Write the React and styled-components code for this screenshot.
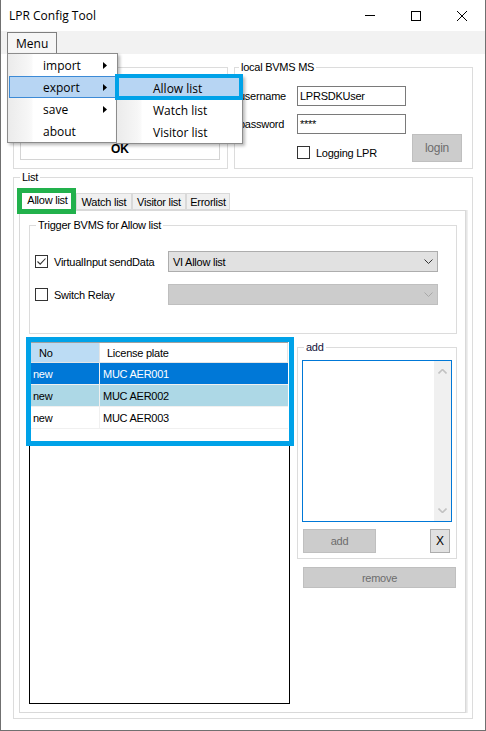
import React from 'react';
import styled, { createGlobalStyle } from 'styled-components';

const UI = `"Liberation Sans", Arial, sans-serif`;
const MENU = `"Open Sans", "Noto Sans", sans-serif`;

const GlobalStyle = createGlobalStyle`
  *, *::before, *::after { box-sizing: border-box; }
  html, body { margin: 0; padding: 0; background: #fff; }
  body { font-family: ${UI}; font-size: 11px; color: #000; letter-spacing: -0.25px; }
`;

const Window = styled.div`
  width: 486px;
  height: 731px;
  background: #fff;
  border-left: 1px solid #707070;
  border-right: 1px solid #707070;
  border-bottom: 1px solid #707070;
  display: flex;
  flex-direction: column;
  overflow: hidden;
`;

const TitleBar = styled.div`
  height: 31px;
  flex: none;
  display: flex;
  align-items: center;
  padding-left: 8px;
  font-family: ${MENU};
  font-size: 12px;
  letter-spacing: 0;
`;

const Controls = styled.div`
  margin-left: auto;
  display: flex;
  height: 100%;
`;

const ControlButton = styled.div`
  width: 46px;
  height: 100%;
  display: flex;
  align-items: center;
  justify-content: center;
`;

const MenuBar = styled.div`
  position: relative;
  height: 23px;
  flex: none;
  background: #f2f2f2;
  padding: 1px 0 0 6px;
  z-index: 10;
  font-family: ${MENU};
  font-size: 12px;
  letter-spacing: 0;
`;

const MenuTop = styled.div`
  width: 50px;
  height: 22px;
  border: 1px solid #7f7f7f;
  border-bottom: none;
  padding-left: 8px;
  display: flex;
  align-items: center;
  background: #f6f6f6;
`;

const PopupBase = styled.div`
  position: absolute;
  border: 1px solid #8c8c8c;
  background: linear-gradient(to right, #ebebeb 0px, #f6f6f6 20px, #fafafa 24px, #fff 25px);
  box-shadow: 2px 2px 3px rgba(0, 0, 0, 0.28);
`;

const Dropdown = styled(PopupBase)`
  left: 6px;
  top: 22px;
  width: 111px;
  height: 90px;
`;

const SubMenu = styled(PopupBase)`
  left: 115px;
  top: 44px;
  width: 127px;
  height: 69px;
  padding-top: 1px;
`;

const MenuEntry = styled.div`
  position: relative;
  height: 22px;
  display: flex;
  align-items: center;
  padding-left: ${p => p.$indent}px;
  padding-right: 9px;
  margin-left: ${p => (p.$sub ? 0 : 1)}px;
  border: 1px solid ${p => (p.$active ? '#3c8ad6' : 'transparent')};
  background: ${p => (p.$active ? '#b7d5f3' : 'transparent')};
`;

const MenuArrow = styled.svg`
  margin-left: auto;
`;

const Annotation = styled.span`
  position: absolute;
  pointer-events: none;
  z-index: 5;
`;

const MenuMark = styled(Annotation)`
  left: -2px;
  top: -2px;
  width: 128px;
  height: 26px;
  border: 4px solid #00a2e8;
`;

const TabMark = styled(Annotation)`
  left: -3px;
  top: -3px;
  width: 59px;
  height: 26px;
  border: 5px solid #22b14c;
`;

const ListMark = styled(Annotation)`
  left: -4px;
  top: -5px;
  width: 268px;
  height: 109px;
  border: 5px solid #00a2e8;
`;

const Body = styled.div`
  flex: 1;
  min-height: 0;
  display: flex;
  flex-direction: column;
  padding: 13px 12px 11px;
`;

const TopRow = styled.div`
  display: flex;
  gap: 6px;
  height: 102px;
  flex: none;
`;

const Group = styled.div`
  border: 1px solid #dcdcdc;
  display: flex;
  flex-direction: column;
  position: relative;
`;

const Legend = styled.div`
  align-self: flex-start;
  margin: -7px 0 0 ${p => p.$ml ?? 1}px;
  padding: 0 2px;
  background: #fff;
  line-height: 13px;
  height: 13px;
  color: ${p => p.$color || '#000'};
`;

const LoginGroup = styled(Group)`
  width: 215px;
`;

const BvmsGroup = styled(Group)`
  flex: 1;
  padding: 0 10px 0 4px;
`;

const OkButton = styled.div`
  margin: auto 0 8px 6px;
  width: 200px;
  height: 22px;
  border: 1px solid #d4d4d4;
  background: #fff;
  display: flex;
  align-items: center;
  justify-content: center;
  font-weight: bold;
  font-size: 12px;
  letter-spacing: 0;
`;

const FormRow = styled.div`
  display: flex;
  align-items: center;
  margin-top: ${p => p.$mt}px;
`;

const FieldLabel = styled.span`
  width: 58px;
  flex: none;
`;

const TextBox = styled.div`
  width: 109px;
  height: 20px;
  border: 1px solid #7a7a7a;
  background: #fff;
  display: flex;
  align-items: center;
  padding-left: 2px;
`;

const LoginRow = styled.div`
  display: flex;
  align-items: flex-start;
  height: 28px;
`;

const CheckItem = styled.label`
  display: flex;
  align-items: center;
  gap: 6px;
  margin-left: ${p => p.$ml || 0}px;
  margin-top: ${p => p.$mt || 0}px;
  width: ${p => (p.$w ? `${p.$w}px` : 'auto')};
  flex: none;
`;

const CheckBoxBox = styled.span`
  width: 13px;
  height: 13px;
  border: 1px solid #333;
  background: #fff;
  display: inline-flex;
  align-items: center;
  justify-content: center;
  flex: none;
`;

const Button = styled.div`
  width: ${p => p.$w}px;
  height: ${p => p.$h}px;
  display: flex;
  align-items: center;
  justify-content: center;
  flex: none;
  font-size: ${p => p.$fs || 11}px;
  background: ${p => (p.$disabled ? '#cccccc' : '#e1e1e1')};
  border: 1px solid ${p => (p.$disabled ? '#bfbfbf' : '#adadad')};
  color: ${p => (p.$disabled ? '#6d6d6d' : '#000')};
`;

const LoginButton = styled(Button)`
  margin-left: auto;
`;

const ListGroup = styled(Group)`
  flex: 1;
  min-height: 0;
  margin-top: 8px;
  padding: 0 6px 5px 5px;
`;

const TabStrip = styled.div`
  display: flex;
  align-items: flex-end;
  height: 20px;
  margin-top: 6px;
  position: relative;
  z-index: 1;
  flex: none;
`;

const Tab = styled.div`
  position: relative;
  width: ${p => p.$w}px;
  height: ${p => (p.$selected ? 21 : 17)}px;
  margin-bottom: ${p => (p.$selected ? -1 : 0)}px;
  padding-bottom: ${p => (p.$selected ? 2 : 0)}px;
  background: ${p => (p.$selected ? '#fff' : '#f0f0f0')};
  border: 1px solid #d9d9d9;
  border-bottom: ${p => (p.$selected ? 'none' : '1px solid #d9d9d9')};
  display: flex;
  align-items: center;
  justify-content: center;
  white-space: nowrap;
`;

const TabPanel = styled.div`
  flex: 1;
  min-height: 0;
  border: 1px solid #d9d9d9;
  box-shadow: 1px 0 0 #e6e6e6, 2px 0 0 #efefef;
  display: flex;
  flex-direction: column;
  padding: 14px 8px 8px 9px;
`;

const TriggerGroup = styled(Group)`
  flex: none;
  padding: 0 0 28px 5px;
`;

const TriggerRow = styled.div`
  display: flex;
  align-items: center;
  height: 21px;
  margin-top: ${p => p.$mt}px;
`;

const Combo = styled.div`
  width: 270px;
  height: 21px;
  display: flex;
  align-items: center;
  padding: 0 4px 0 4px;
  background: ${p => (p.$disabled ? '#cccccc' : '#e1e1e1')};
  border: 1px solid ${p => (p.$disabled ? '#bfbfbf' : '#adadad')};
`;

const ComboText = styled.span`
  flex: 1;
`;

const BottomRow = styled.div`
  flex: 1;
  min-height: 0;
  display: flex;
  gap: 7px;
  margin-top: 7px;
`;

const ListBox = styled.div`
  position: relative;
  width: 261px;
  border: 1px solid #000;
  padding: 0 1px;
  background: #fff;
`;

const ListHeader = styled.div`
  display: flex;
  height: 21px;
  border-top: 1px solid #a0a0a0;
  border-bottom: 1px solid #e5e5e5;
`;

const HeaderCell = styled.div`
  display: flex;
  align-items: center;
  padding-left: ${p => p.$pl}px;
  width: ${p => (p.$w ? `${p.$w}px` : 'auto')};
  flex: ${p => (p.$w ? 'none' : 1)};
  background: ${p => p.$bg || '#fff'};
  border-right: 1px solid #e5e5e5;
`;

const ListRow = styled.div`
  display: flex;
  height: 22px;
  background: ${p => p.$bg};
  color: ${p => p.$fg || '#000'};
  border-bottom: 1px solid #f0f0f0;
`;

const RowCell = styled.div`
  display: flex;
  align-items: center;
  padding-left: ${p => p.$pl}px;
  width: ${p => (p.$w ? `${p.$w}px` : 'auto')};
  flex: ${p => (p.$w ? 'none' : 1)};
  border-right: ${p => (p.$w ? '1px solid #f0f0f0' : 'none')};
`;

const RightCol = styled.div`
  width: 160px;
  display: flex;
  flex-direction: column;
  padding-top: 6px;
`;

const AddGroup = styled(Group)`
  height: 212px;
  flex: none;
  padding: 0 4px 5px 4px;
`;

const TextArea = styled.div`
  margin-top: 6px;
  width: 150px;
  height: 162px;
  border: 1px solid #0078d7;
  background: #fff;
  display: flex;
  justify-content: flex-end;
`;

const ScrollBar = styled.div`
  width: 17px;
  background: #f0f0f0;
  display: flex;
  flex-direction: column;
  justify-content: space-between;
  align-items: center;
  padding: 8px 0;
`;

const ButtonRow = styled.div`
  display: flex;
  justify-content: space-between;
  margin-top: 7px;
  padding: 0 2px 0 1px;
`;

const RemoveButton = styled(Button)`
  margin: 8px 0 0 6px;
`;

const Chevron = ({ color = '#333', up = false, w = 9, h = 5, sw = 1 }) => (
  <svg width={w} height={h} viewBox="0 0 9 5">
    <path
      d={up ? 'M0.5 4.5 L4.5 0.5 L8.5 4.5' : 'M0.5 0.5 L4.5 4.5 L8.5 0.5'}
      fill="none"
      stroke={color}
      strokeWidth={sw}
    />
  </svg>
);

const Arrow = () => (
  <MenuArrow width="4" height="7" viewBox="0 0 4 7">
    <polygon points="0,0 4,3.5 0,7" fill="#000" />
  </MenuArrow>
);

const Check = ({ checked }) => (
  <CheckBoxBox>
    {checked && (
      <svg width="11" height="11" viewBox="0 0 11 11">
        <path d="M1.5 5.5 L4.2 8.2 L9.5 2.5" fill="none" stroke="#333" strokeWidth="1.1" />
      </svg>
    )}
  </CheckBoxBox>
);

const rows = [
  { no: 'new', plate: 'MUC AER001', bg: '#0078d7', fg: '#fff' },
  { no: 'new', plate: 'MUC AER002', bg: '#add8e6' },
  { no: 'new', plate: 'MUC AER003', bg: '#fff' },
];

const tabs = [
  { label: 'Allow list', w: 57, selected: true },
  { label: 'Watch list', w: 56 },
  { label: 'Visitor list', w: 54 },
  { label: 'Errorlist', w: 44 },
];

export default function App() {
  return (
    <>
      <GlobalStyle />
      <Window>
        <TitleBar>
          <span>LPR Config Tool</span>
          <Controls>
            <ControlButton>
              <svg width="10" height="1" viewBox="0 0 10 1">
                <rect x="0" y="0" width="10" height="1" fill="#000" />
              </svg>
            </ControlButton>
            <ControlButton>
              <svg width="10" height="10" viewBox="0 0 10 10">
                <rect x="0.5" y="0.5" width="9" height="9" fill="none" stroke="#000" strokeWidth="1" />
              </svg>
            </ControlButton>
            <ControlButton>
              <svg width="10" height="10" viewBox="0 0 10 10">
                <path d="M0 0 L10 10 M10 0 L0 10" stroke="#000" strokeWidth="1" />
              </svg>
            </ControlButton>
          </Controls>
        </TitleBar>

        <MenuBar>
          <MenuTop>Menu</MenuTop>
          <Dropdown>
            <MenuEntry $indent={33}>import<Arrow /></MenuEntry>
            <MenuEntry $indent={33} $active>export<Arrow /></MenuEntry>
            <MenuEntry $indent={33}>save<Arrow /></MenuEntry>
            <MenuEntry $indent={33}>about</MenuEntry>
          </Dropdown>
          <SubMenu>
            <MenuEntry $indent={35} $sub $active>Allow list</MenuEntry>
            <MenuEntry $indent={35} $sub>Watch list</MenuEntry>
            <MenuEntry $indent={35} $sub>Visitor list</MenuEntry>
            <MenuMark />
          </SubMenu>
        </MenuBar>

        <Body>
          <TopRow>
            <LoginGroup>
              <OkButton>OK</OkButton>
            </LoginGroup>
            <BvmsGroup>
              <Legend $ml={0}>local BVMS MS</Legend>
              <FormRow $mt={12}>
                <FieldLabel>username</FieldLabel>
                <TextBox>LPRSDKUser</TextBox>
              </FormRow>
              <FormRow $mt={8}>
                <FieldLabel>password</FieldLabel>
                <TextBox>****</TextBox>
              </FormRow>
              <LoginRow>
                <CheckItem $ml={58} $mt={12}>
                  <Check />
                  <span>Logging LPR</span>
                </CheckItem>
                <LoginButton $w={50} $h={28} $disabled $fs={12}>login</LoginButton>
              </LoginRow>
            </BvmsGroup>
          </TopRow>

          <ListGroup>
            <Legend $ml={1}>List</Legend>
            <TabStrip>
              {tabs.map(t => (
                <Tab key={t.label} $w={t.w} $selected={t.selected}>
                  {t.label}
                  {t.selected && <TabMark />}
                </Tab>
              ))}
            </TabStrip>
            <TabPanel>
              <TriggerGroup>
                <Legend $ml={1}>Trigger BVMS for Allow list</Legend>
                <TriggerRow $mt={19}>
                  <CheckItem $w={133}>
                    <Check checked />
                    <span>VirtualInput sendData</span>
                  </CheckItem>
                  <Combo>
                    <ComboText>VI Allow list</ComboText>
                    <Chevron color="#333" />
                  </Combo>
                </TriggerRow>
                <TriggerRow $mt={12}>
                  <CheckItem $w={133}>
                    <Check />
                    <span>Switch Relay</span>
                  </CheckItem>
                  <Combo $disabled>
                    <ComboText />
                    <Chevron color="#a8a8a8" />
                  </Combo>
                </TriggerRow>
              </TriggerGroup>

              <BottomRow>
                <ListBox>
                  <ListHeader>
                    <HeaderCell $w={69} $pl={8} $bg="#bcdcf4">No</HeaderCell>
                    <HeaderCell $pl={7}>License plate</HeaderCell>
                  </ListHeader>
                  {rows.map(r => (
                    <ListRow key={r.plate} $bg={r.bg} $fg={r.fg}>
                      <RowCell $w={69} $pl={2}>{r.no}</RowCell>
                      <RowCell $pl={3}>{r.plate}</RowCell>
                    </ListRow>
                  ))}
                  <ListMark />
                </ListBox>

                <RightCol>
                  <AddGroup>
                    <Legend $ml={2} $color="#14143c">add</Legend>
                    <TextArea>
                      <ScrollBar>
                        <Chevron up color="#c2c2c2" sw={1.6} />
                        <Chevron color="#c2c2c2" sw={1.6} />
                      </ScrollBar>
                    </TextArea>
                    <ButtonRow>
                      <Button $w={73} $h={24} $disabled>add</Button>
                      <Button $w={20} $h={24} $fs={12}>X</Button>
                    </ButtonRow>
                  </AddGroup>
                  <RemoveButton $w={153} $h={21} $disabled>remove</RemoveButton>
                </RightCol>
              </BottomRow>
            </TabPanel>
          </ListGroup>
        </Body>
      </Window>
    </>
  );
}
